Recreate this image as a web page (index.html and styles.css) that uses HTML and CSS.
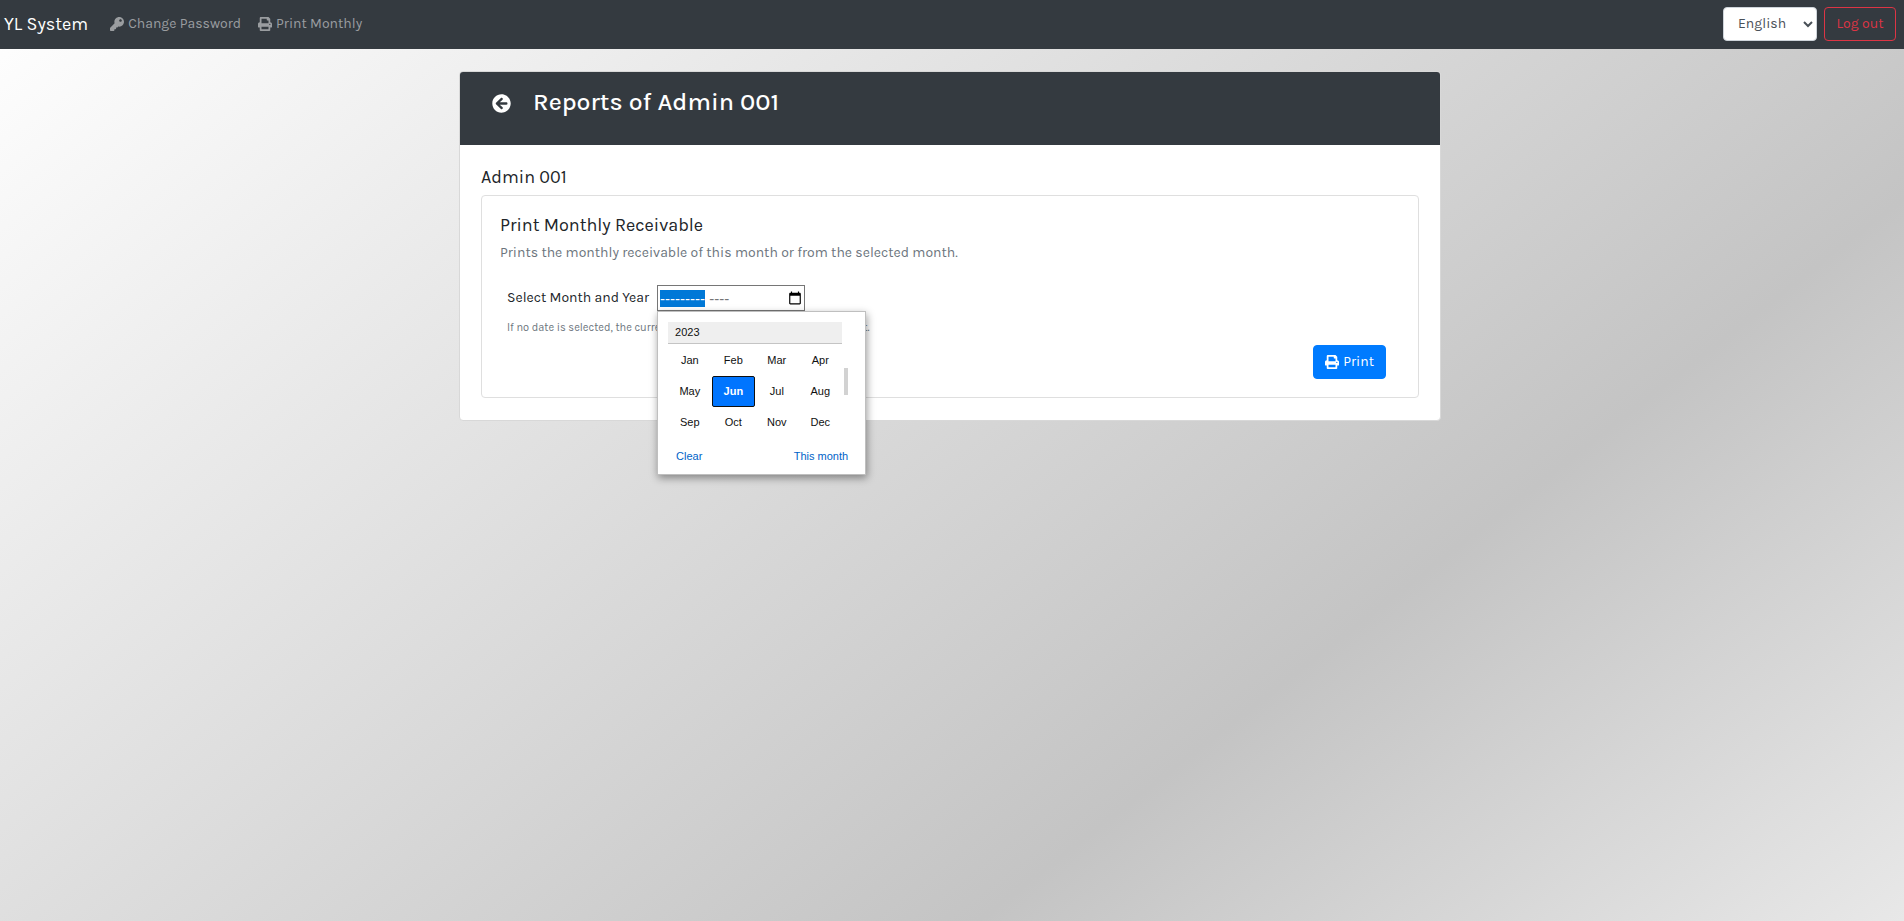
FILE: index.html
```
<!DOCTYPE html>
<html lang="en">
<head>
<meta charset="utf-8">
<meta name="viewport" content="width=device-width, initial-scale=1">
<title>YL System</title>
<link rel="stylesheet" href="styles.css">
</head>
<body>
<svg class="sprite" aria-hidden="true">
  <symbol id="key" viewBox="0 0 512 512"><path d="M512 176.001C512 273.203 433.202 352 336 352c-11.22 0-22.19-1.062-32.827-3.069l-24.012 27.014A23.999 23.999 0 0 1 261.223 384H224v40c0 13.255-10.745 24-24 24h-40v40c0 13.255-10.745 24-24 24H24c-13.255 0-24-10.745-24-24v-78.059c0-6.365 2.529-12.47 7.029-16.971l161.802-161.802C163.108 213.814 160 195.271 160 176 160 78.798 238.797.001 335.999 0 433.488-.001 512 78.511 512 176.001zM336 128c0 26.51 21.49 48 48 48s48-21.49 48-48-21.49-48-48-48-48 21.49-48 48z"/></symbol>
  <symbol id="print" viewBox="0 0 512 512"><path d="M448 192V77.25c0-8.49-3.37-16.62-9.37-22.63L393.37 9.37c-6-6-14.14-9.37-22.63-9.37H96C78.33 0 64 14.33 64 32v160c-35.35 0-64 28.65-64 64v112c0 8.84 7.16 16 16 16h48v96c0 17.67 14.33 32 32 32h320c17.67 0 32-14.33 32-32v-96h48c8.84 0 16-7.16 16-16V256c0-35.35-28.65-64-64-64zm-64 256H128v-96h256v96zm0-224H128V64h192v48c0 8.84 7.16 16 16 16h48v96zm48 72c-13.25 0-24-10.75-24-24 0-13.26 10.75-24 24-24s24 10.74 24 24c0 13.25-10.75 24-24 24z"/></symbol>
  <symbol id="back" viewBox="0 0 512 512"><path d="M256 504C119 504 8 393 8 256S119 8 256 8s248 111 248 248-111 248-248 248zm28.9-143.6L209.4 288H392c13.3 0 24-10.7 24-24v-16c0-13.3-10.7-24-24-24H209.4l75.5-72.4c9.7-9.3 9.9-24.8.4-34.3l-11-10.9c-9.4-9.4-24.6-9.4-33.9 0L107.7 239c-9.4 9.4-9.4 24.6 0 33.9l132.7 132.7c9.4 9.4 24.6 9.4 33.9 0l11-10.9c9.5-9.5 9.3-25-.4-34.3z"/></symbol>
  <symbol id="calendar" viewBox="0 0 24 24"><path d="M20 3h-1V1h-2v2H7V1H5v2H4c-1.100 0-2 .9-2 2v16c0 1.100.9 2 2 2h16c1.100 0 2-.9 2-2V5c0-1.100-.9-2-2-2zm0 18H4V8h16v13z"/></symbol>
</svg>
<header class="navbar">
  <a class="brand" href="#">YL System</a>
  <nav class="nav">
    <a class="nav-link" href="#"><svg class="icon"><use href="#key"/></svg>Change Password</a>
    <a class="nav-link" href="#"><svg class="icon"><use href="#print"/></svg>Print Monthly</a>
  </nav>
  <div class="nav-actions">
    <select class="language" aria-label="Language"><option>English</option></select>
    <button class="btn btn-logout" type="button">Log out</button>
  </div>
</header>
<main class="container">
  <section class="card">
    <header class="card-header">
      <a class="back" href="#" aria-label="Back"><svg class="icon-back"><use href="#back"/></svg></a>
      <h1 class="title">Reports of Admin 001</h1>
    </header>
    <div class="card-body">
      <h2 class="heading">Admin 001</h2>
      <section class="panel">
        <h3 class="heading">Print Monthly Receivable</h3>
        <p class="subtitle">Prints the monthly receivable of this month or from the selected month.</p>
        <form class="form">
          <div class="field">
            <label for="month">Select Month and Year</label>
            <div class="month-wrap">
              <input class="month" id="month" type="text" value="--------- ----" autocomplete="off">
              <button class="month-toggle" type="button" aria-label="Show month picker"><svg class="icon-calendar"><use href="#calendar"/></svg></button>
              <div class="picker">
                <div class="picker-main">
                  <div class="picker-year">2023</div>
                  <div class="months">
                    <button type="button" class="m">Jan</button><button type="button" class="m">Feb</button><button type="button" class="m">Mar</button><button type="button" class="m">Apr</button>
                    <button type="button" class="m">May</button><button type="button" class="m current">Jun</button><button type="button" class="m">Jul</button><button type="button" class="m">Aug</button>
                    <button type="button" class="m">Sep</button><button type="button" class="m">Oct</button><button type="button" class="m">Nov</button><button type="button" class="m">Dec</button>
                  </div>
                  <span class="thumb"></span>
                </div>
                <div class="picker-footer">
                  <button type="button" class="picker-action">Clear</button>
                  <button type="button" class="picker-action">This month</button>
                </div>
              </div>
            </div>
          </div>
          <p class="hint">If no date is selected, the current month and year will be used by default.</p>
          <div class="submit"><button class="btn btn-print" type="submit"><svg class="icon"><use href="#print"/></svg>Print</button></div>
        </form>
      </section>
    </div>
  </section>
</main>
<script src="script.js"></script>
</body>
</html>
```

FILE: script.js
```
// Start with the month part of the field selected.
const month = document.getElementById('month');
month.focus();
month.setSelectionRange(0, 9);
```

FILE: styles.css
```
* { box-sizing: border-box; }
html { min-height: 100%; }
body {
  margin: 0;
  min-height: 100vh;
  font: 14px/24px Karla, Inter, "Liberation Sans", sans-serif;
  color: #212529;
  background: linear-gradient(142deg, #fff 0%, #c4c4c4 70%, #e8e8e8 100%);
}
h1, h2, h3, p { margin: 0; font-weight: 400; }
a { color: inherit; text-decoration: none; }
button, select { font: inherit; cursor: pointer; }
.sprite { position: absolute; width: 0; height: 0; }
.icon { width: 14px; height: 14px; margin-right: 4px; fill: currentColor; }

.navbar { display: flex; align-items: center; height: 49px; padding: 0 8px 2px 4px; background: #343a40; }
.brand { margin-right: 22px; font-size: 18px; color: #fff; }
.nav { display: flex; gap: 17px; }
.nav-link { display: flex; align-items: center; color: #9a9da0; }
.nav-actions { display: flex; gap: 7px; margin-left: auto; }
.language { width: 94px; height: 34px; padding: 0 10px; border: 1px solid #ced4da; border-radius: 4px; background: #fff; color: #495057; }
.btn { display: flex; align-items: center; justify-content: center; min-width: 72px; height: 34px; padding: 0 11px; border: 1px solid; border-radius: 4px; }
.btn-logout { border-color: #dc3545; background: none; color: #dc3545; }

.container { max-width: 1014px; margin: 0 auto; padding: 22px 18px 22px 14px; }
.card { border: 1px solid #d8d8d8; border-radius: 4px; background: #fff; }
.card-header { display: flex; align-items: flex-start; gap: 22px; height: 73px; padding: 14px 32px; border-radius: 3px 3px 0 0; background: #343a40; color: #fff; }
.back { display: flex; padding-top: 8px; }
.icon-back { width: 19px; height: 19px; fill: currentColor; }
.title { font-size: 25px; line-height: 32px; font-weight: 500; }
.card-body { padding: 20px 21px 22px; }
.heading { font-size: 18px; line-height: 24px; }
.panel { margin-top: 6px; padding: 17px 18px 18px; border: 1px solid #dfdfdf; border-radius: 4px; }
.subtitle { margin-top: 4px; color: #6c757d; }
.form { padding: 20px 14px 0 7px; }
.field { display: flex; align-items: center; gap: 8px; height: 26px; }
.month-wrap { position: relative; display: flex; }
.month { width: 148px; height: 26px; padding: 1px 24px 1px 2px; border: 1px solid #767676; outline: 0; background: #fff; font: 15px/20px "Liberation Sans", sans-serif; color: #757575; }
.month::selection { background: #0078d7; color: #fff; }
.month-toggle { position: absolute; top: 1px; right: 0; display: flex; align-items: center; justify-content: center; width: 20px; height: 24px; padding: 0; border: 0; background: none; }
.icon-calendar { width: 14px; height: 14px; fill: #000; }
.hint { margin-top: 5px; font-size: 11px; color: #6c757d; }
.submit { display: flex; justify-content: flex-end; margin-top: 5px; }
.btn-print { border-color: #007bff; background: #007bff; color: #fff; }

.picker { position: absolute; top: 26px; left: 0; width: 209px; padding: 10px; border: 1px solid #bfbfbf; background: #fff; box-shadow: 1px 3px 8px rgba(0, 0, 0, .4); font: 11px/15px "Liberation Sans", sans-serif; color: #101010; }
.picker-main { position: relative; padding-right: 13px; }
.picker-year { height: 22px; padding: 3px 7px; border-bottom: 1px solid #c4c4c4; background: #efefef; }
.months { display: grid; grid-template-columns: repeat(4, 1fr); padding-top: 1px; }
.m { height: 31px; padding: 0; border: 1px solid transparent; border-radius: 2px; background: none; color: inherit; }
.m.current { border-color: #101010; background: #0075ff; color: #fff; font-weight: 700; }
.thumb { position: absolute; right: 7px; top: 46px; width: 4px; height: 27px; background: #d2d2d2; }
.picker-footer { display: flex; justify-content: space-between; padding: 11px 7px 0 8px; }
.picker-action { padding: 0; border: 0; background: none; color: #0063c8; line-height: 15px; }
```
